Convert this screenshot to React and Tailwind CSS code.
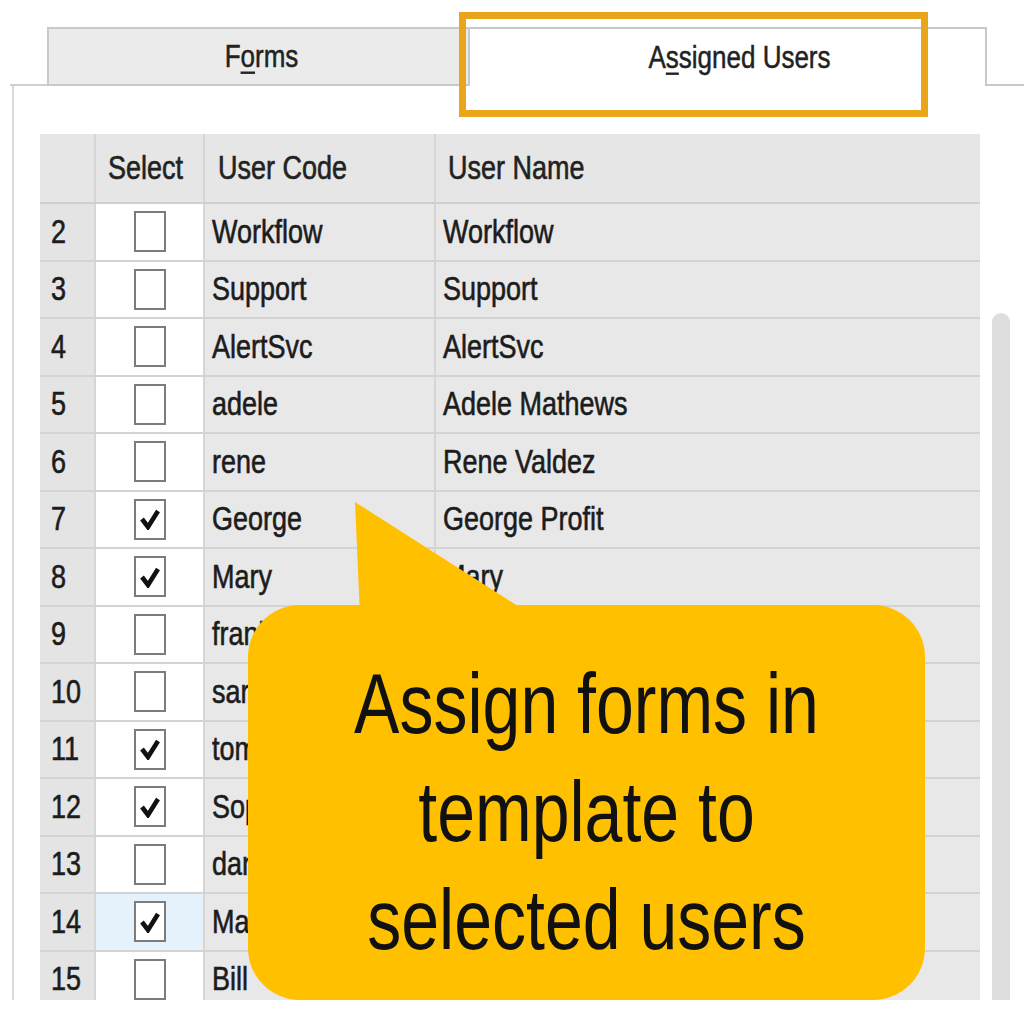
import React from 'react'

const ROWS = [
  { n: 2, code: 'Workflow', name: 'Workflow', on: false },
  { n: 3, code: 'Support', name: 'Support', on: false },
  { n: 4, code: 'AlertSvc', name: 'AlertSvc', on: false },
  { n: 5, code: 'adele', name: 'Adele Mathews', on: false },
  { n: 6, code: 'rene', name: 'Rene Valdez', on: false },
  { n: 7, code: 'George', name: 'George Profit', on: true },
  { n: 8, code: 'Mary', name: 'Mary', on: true },
  { n: 9, code: 'frank', name: '', on: false },
  { n: 10, code: 'sarah', name: '', on: false },
  { n: 11, code: 'tom', name: '', on: true },
  { n: 12, code: 'Sophie', name: '', on: true },
  { n: 13, code: 'dan', name: '', on: false },
  { n: 14, code: 'Mark', name: '', on: true, hl: true },
  { n: 15, code: 'Bill', name: '', on: false },
]

// text in the source is a little stretched vertically
function T({ children, className = '' }) {
  return <span className={`inline-block scale-y-[1.2] ${className}`}>{children}</span>
}

function CheckBox({ on }) {
  return (
    <div className="w-[32px] h-[41px] border-2 border-[#7c7c7c] bg-white flex items-center justify-center">
      {on && (
        <svg width="22" height="22" viewBox="0 0 22 22">
          <path d="M3 11 L9 19 L19 3" fill="none" stroke="#111" strokeWidth="4.6" strokeLinejoin="miter" />
        </svg>
      )}
    </div>
  )
}

function Row({ row }) {
  return (
    <div className="grid grid-cols-[56px_109px_231px_544px] h-[57.5px] border-b-2 border-[#d3d3d3] text-[27px] text-[#1c1c1c] [-webkit-text-stroke:0.5px_#1c1c1c]">
      <div className="bg-[#e4e4e4] border-r-2 border-[#d6d6d6] flex items-center pl-[11px]">
        <T>{row.n}</T>
      </div>
      <div className={`${row.hl ? 'bg-[#e5f1fb]' : 'bg-white'} border-r-2 border-[#d6d6d6] flex items-center justify-center`}>
        <CheckBox on={row.on} />
      </div>
      <div className="bg-[#e8e8e8] border-r-2 border-[#d6d6d6] flex items-center pl-[7px]">
        <T>{row.code}</T>
      </div>
      <div className="bg-[#e8e8e8] flex items-center pl-[7px]">
        <T>{row.name}</T>
      </div>
    </div>
  )
}

export default function App() {
  return (
    <div className="relative w-[1024px] h-[1024px] overflow-hidden bg-white font-['Liberation_Sans',Arial,sans-serif]">
      {/* tab strip */}
      <div className="flex items-end h-[86px] pt-[27px]">
        <div className="ml-[10px] w-[37px] border-b-2 border-[#d0d0d0]" />
        <div className="w-[423px] h-[59px] bg-[#ebebeb] border-2 border-[#c9c9c9] flex items-center justify-center pl-[6px] text-[26px] text-[#222] [-webkit-text-stroke:0.4px_#222]">
          <T>
            F<span className="underline underline-offset-4">o</span>rms
          </T>
        </div>
        <div className="w-[517px] h-[59px] bg-white border-r-2 border-t-2 border-[#c9c9c9] flex items-center justify-center pl-[24px] text-[26px] text-[#222] [-webkit-text-stroke:0.4px_#222]">
          <T>
            A<span className="underline underline-offset-4">s</span>signed Users
          </T>
        </div>
        <div className="flex-1 border-b-2 border-[#c9c9c9]" />
      </div>

      {/* panel */}
      <div className="ml-[12px] h-[914px] border-l-2 border-[#dadada] pt-[48px] pl-[26px] overflow-hidden">
        <div className="w-[940px]">
          <div className="grid grid-cols-[56px_109px_231px_544px] h-[70px] bg-[#e6e6e6] border-b-2 border-[#d0d0d0] text-[27px] text-[#222] [-webkit-text-stroke:0.5px_#222]">
            <div className="border-r-2 border-[#d6d6d6]" />
            <div className="border-r-2 border-[#d6d6d6] flex items-center pl-[12px]">
              <T>Select</T>
            </div>
            <div className="border-r-2 border-[#d6d6d6] flex items-center pl-[13px]">
              <T>User Code</T>
            </div>
            <div className="flex items-center pl-[12px]">
              <T>User Name</T>
            </div>
          </div>
          {ROWS.map((r) => (
            <Row key={r.n} row={r} />
          ))}
        </div>
      </div>

      {/* scrollbar */}
      <div className="absolute left-[992px] top-[313px] w-[18px] h-[687px] rounded-t-full bg-[#dedede]" />

      {/* highlight around active tab */}
      <div className="absolute left-[459px] top-[12px] w-[469px] h-[105px] border-[7px] border-[#e9a61a]" />

      {/* callout */}
      <svg className="absolute left-[340px] top-[500px]" width="200" height="115" viewBox="0 0 200 115">
        <polygon points="15,2 20,115 192,115" fill="#ffc000" />
      </svg>
      <div className="absolute left-[248px] top-[605px] w-[677px] h-[395px] rounded-[52px] bg-[#ffc000] pt-[44px] flex flex-col items-center text-[68px] leading-[108px] text-[#111]">
        <T className="scale-y-[1.25]">Assign forms in</T>
        <T className="scale-y-[1.25]">template to</T>
        <T className="scale-y-[1.25]">selected users</T>
      </div>
    </div>
  )
}
